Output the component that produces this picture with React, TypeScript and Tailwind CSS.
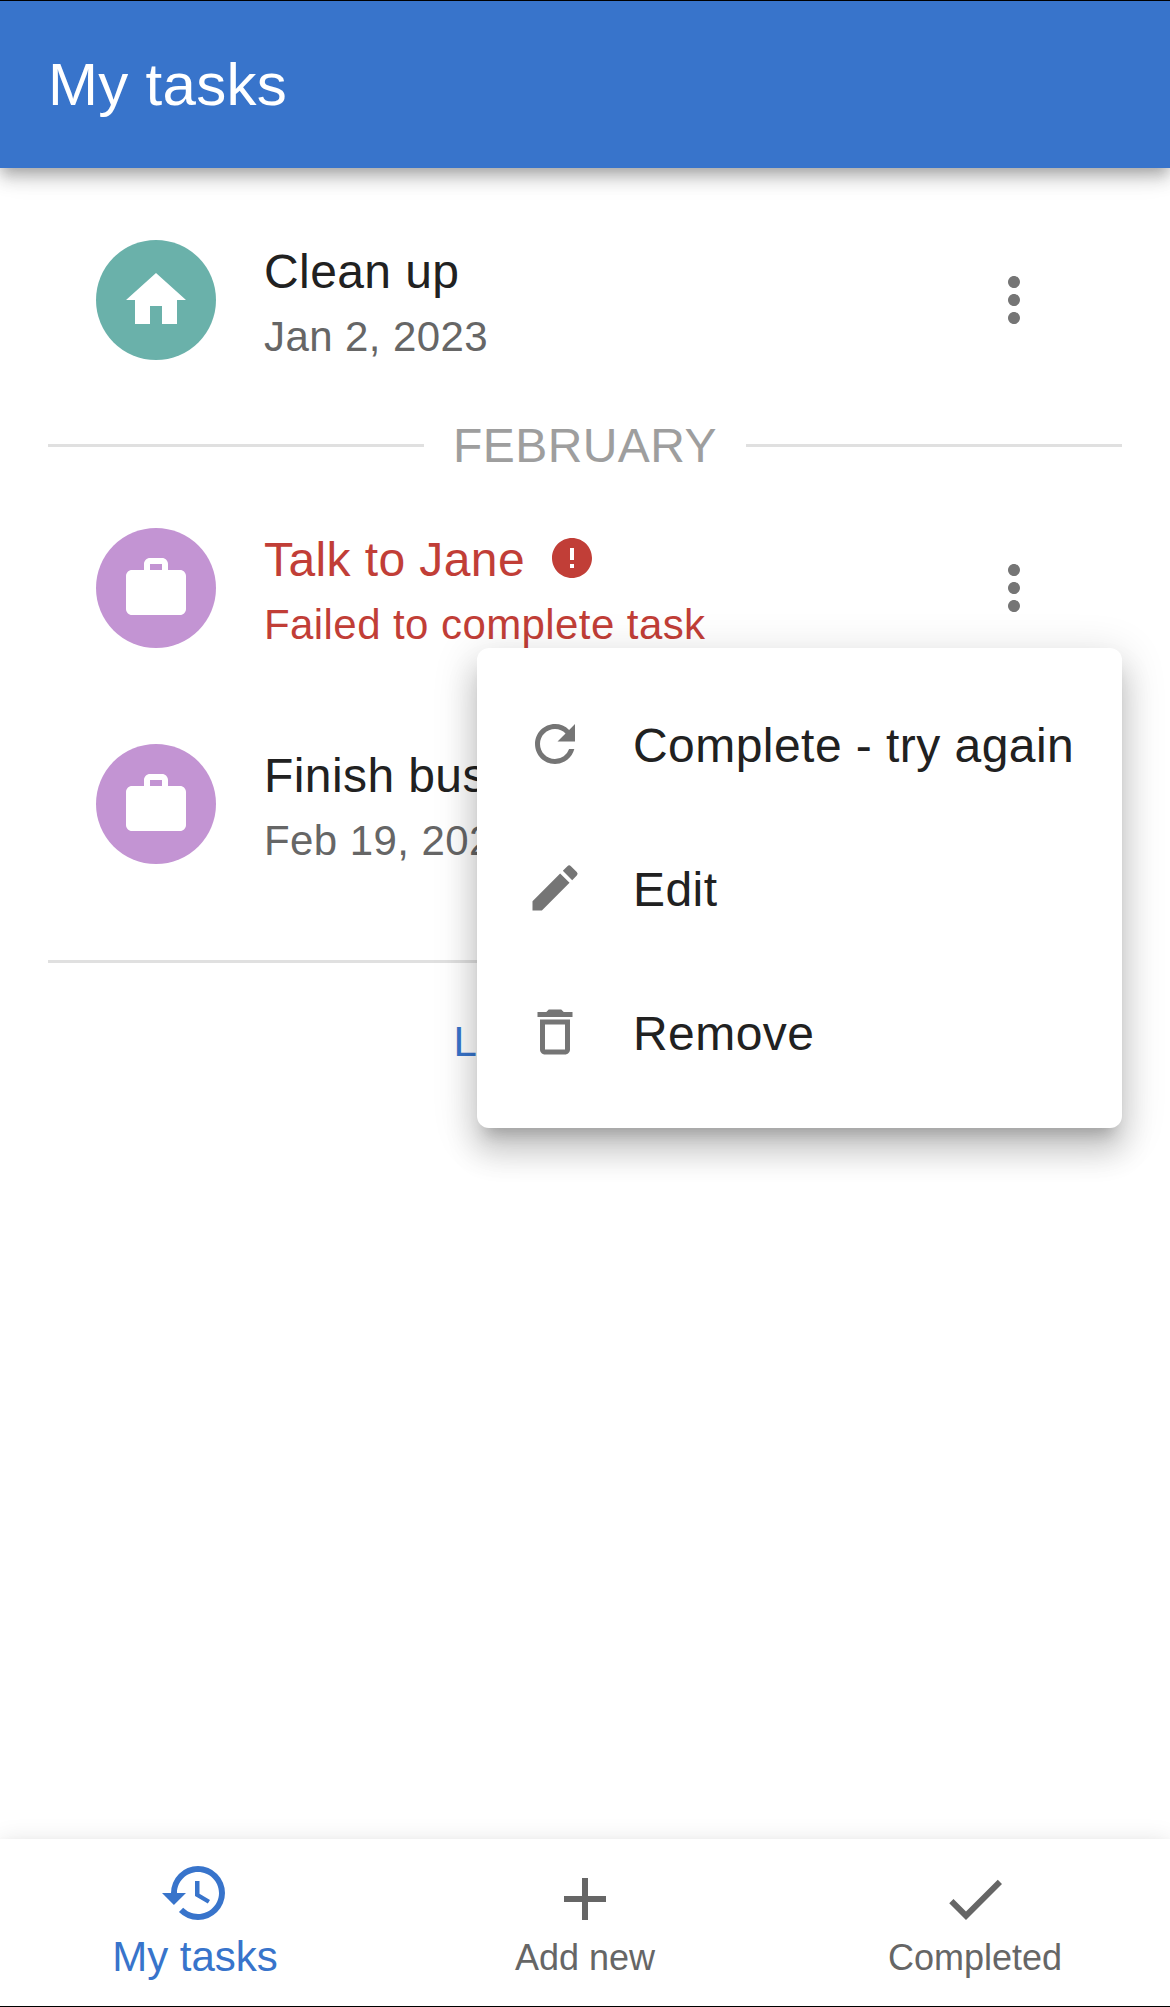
import type { ReactNode } from "react";
import {
  MdAdd,
  MdCheck,
  MdDeleteOutline,
  MdEdit,
  MdError,
  MdHistory,
  MdHome,
  MdMoreVert,
  MdRefresh,
  MdWork,
} from "react-icons/md";

type TaskProps = {
  title: string;
  detail: string;
  icon: ReactNode;
  avatarClass: string;
  failed?: boolean;
  children?: ReactNode;
};

function Task({ title, detail, icon, avatarClass, failed, children }: TaskProps) {
  return (
    <li className="relative flex h-[216px] items-center pr-[120px] pl-24">
      <div className={`flex size-[120px] shrink-0 items-center justify-center rounded-full text-white ${avatarClass}`}>
        {icon}
      </div>
      <div className={`ml-12 flex-1 whitespace-nowrap ${failed ? "text-[#c13e37]" : "text-[#212121]"}`}>
        <div className="flex h-[72px] items-center gap-[23px]">
          <span className="pt-1 text-[48px] leading-[72px] tracking-[0.0085em]">{title}</span>
          {failed && <MdError className="size-12" />}
        </div>
        <div className={`pt-px text-[42px] leading-[60px] tracking-[0.01em] ${failed ? "" : "text-[#666666]"}`}>
          {detail}
        </div>
      </div>
      <button aria-label="Task options" className="text-[#757575]">
        <MdMoreVert className="size-[72px]" />
      </button>
      {children}
    </li>
  );
}

function MenuItem({ icon, label }: { icon: ReactNode; label: string }) {
  return (
    <li className="flex h-36 items-center pl-12">
      <span className="w-[108px] text-[#757575]">{icon}</span>
      <span className="pt-1 text-[48px] leading-[72px] tracking-[0.00938em] whitespace-nowrap text-[#212121]">
        {label}
      </span>
    </li>
  );
}

function TaskMenu() {
  return (
    <ul className="absolute top-[168px] right-12 z-10 w-[645px] rounded-xl bg-white py-6 shadow-[0_15px_15px_-9px_rgba(0,0,0,0.2),0_24px_30px_3px_rgba(0,0,0,0.14),0_9px_42px_6px_rgba(0,0,0,0.12)]">
      <MenuItem icon={<MdRefresh className="size-[60px]" />} label="Complete - try again" />
      <MenuItem icon={<MdEdit className="size-[60px]" />} label="Edit" />
      <MenuItem icon={<MdDeleteOutline className="size-[60px]" />} label="Remove" />
    </ul>
  );
}

export default function App() {
  return (
    <div className="flex h-[2007px] w-[1170px] flex-col overflow-hidden bg-white font-['Liberation_Sans',Arial,sans-serif]">
      <header className="flex h-[168px] shrink-0 items-center border-t border-black bg-[#3874cb] px-12 shadow-[0_6px_12px_-3px_rgba(0,0,0,0.2),0_12px_15px_0_rgba(0,0,0,0.14),0_3px_30px_0_rgba(0,0,0,0.12)]">
        <h1 className="text-[60px] leading-[96px] tracking-[0.005em] text-white">My tasks</h1>
      </header>

      <main className="flex-1 pt-6">
        <ul>
          <Task title="Clean up" detail="Jan 2, 2023" icon={<MdHome className="size-[72px]" />} avatarClass="bg-[#6ab1aa]" />
        </ul>
        <div className="mx-12 flex h-[72px] items-center gap-[29px]">
          <div className="mt-[3px] h-[3px] flex-1 bg-[#e0e0e0]" />
          <span className="pt-[3px] text-[48px] leading-[72px] tracking-[0.00938em] text-[#9e9e9e]">FEBRUARY</span>
          <div className="mt-[3px] h-[3px] flex-1 bg-[#e0e0e0]" />
        </div>
        <ul>
          <Task
            title="Talk to Jane"
            detail="Failed to complete task"
            icon={<MdWork className="size-[72px]" />}
            avatarClass="bg-[#c394d3]"
            failed
          >
            <TaskMenu />
          </Task>
          <Task
            title="Finish business plan"
            detail="Feb 19, 2023"
            icon={<MdWork className="size-[72px]" />}
            avatarClass="bg-[#c394d3]"
          />
        </ul>
        <div className="mx-12 mt-12 h-[3px] bg-[#e0e0e0]" />
        <div className="mt-6 flex justify-center">
          <button className="h-[108px] px-6 text-[42px] tracking-[0.02857em] text-[#3874cb] uppercase">Load more</button>
        </div>
      </main>

      <nav className="flex h-[168px] shrink-0 justify-center border-b border-black bg-white shadow-[0_9px_9px_-6px_rgba(0,0,0,0.2),0_9px_12px_0_rgba(0,0,0,0.14),0_3px_24px_0_rgba(0,0,0,0.12)]">
        <a className="flex flex-1 flex-col items-center pt-[18px] text-[#3874cb]">
          <MdHistory className="size-[72px]" />
          <span className="mt-[3px] text-[42px] leading-[50px]">My tasks</span>
        </a>
        <a className="flex flex-1 flex-col items-center pt-6 text-[#666666]">
          <MdAdd className="size-[72px]" />
          <span className="mt-px text-[36px] leading-[44px]">Add new</span>
        </a>
        <a className="flex flex-1 flex-col items-center pt-6 text-[#666666]">
          <MdCheck className="size-[72px]" />
          <span className="mt-px text-[36px] leading-[44px]">Completed</span>
        </a>
      </nav>
    </div>
  );
}
